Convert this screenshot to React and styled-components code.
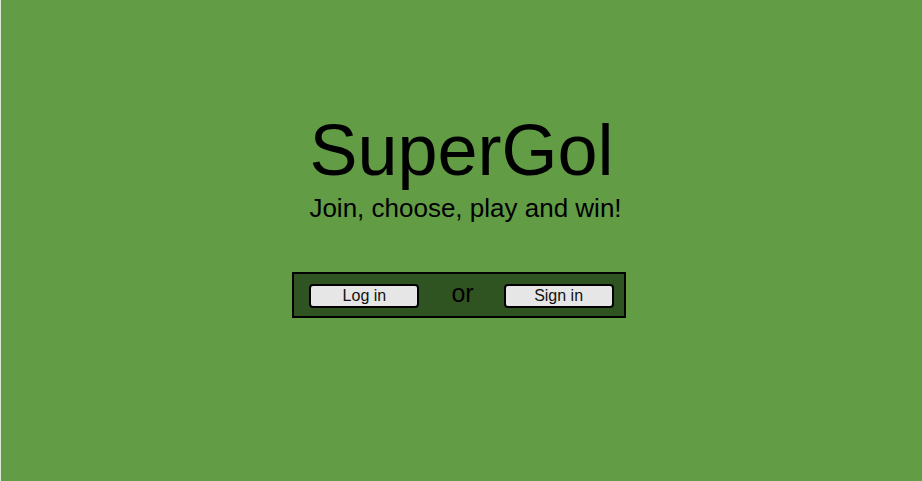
import React from 'react'
import styled, { createGlobalStyle } from "styled-components"

const GlobalStyle = createGlobalStyle`
html, body {
  margin: 0;
  padding: 0;
  height: 100%;
}
body {
  font-family: "Liberation Sans", Arial, sans-serif;
  background: #629c45;
}
#root {
  height: 100%;
}
`

const Page = styled.div`
height: 100%;
box-sizing: border-box;
border-left: 1px solid #dfe8da;
background: #629c45;
display: flex;
flex-direction: column;
align-items: center;
padding-top: 114px;
`

const Title = styled.h1`
margin: 0;
font-size: 72px;
font-weight: normal;
line-height: 72px;
color: #000;
`

const Tagline = styled.p`
margin: 7px 0 0 8px;
font-size: 26px;
line-height: 30px;
color: #000;
`

const AuthBox = styled.div`
margin-top: 49px;
margin-right: 5px;
display: flex;
align-items: flex-start;
background: #2f5321;
border: 2px solid #000;
padding: 10px 10px 8px 15px;
`

const AuthButton = styled.button`
width: 110px;
height: 24px;
box-sizing: border-box;
background: #e6e6e6;
border: 2px solid #000;
border-radius: 4px;
font-family: "Liberation Sans", Arial, sans-serif;
font-size: 16px;
color: #111;
padding: 0;
line-height: 20px;
cursor: pointer;
`

const Or = styled.span`
margin: -4px 30px 0 32px;
font-size: 25px;
line-height: 26px;
color: #000;
`

const App = () => {
    return (
        <React.Fragment>
            <GlobalStyle />
            <Page>
                <Title>SuperGol</Title>
                <Tagline>Join, choose, play and win!</Tagline>
                <AuthBox>
                    <AuthButton>Log in</AuthButton>
                    <Or>or</Or>
                    <AuthButton>Sign in</AuthButton>
                </AuthBox>
            </Page>
        </React.Fragment>
    )
}

export default App
